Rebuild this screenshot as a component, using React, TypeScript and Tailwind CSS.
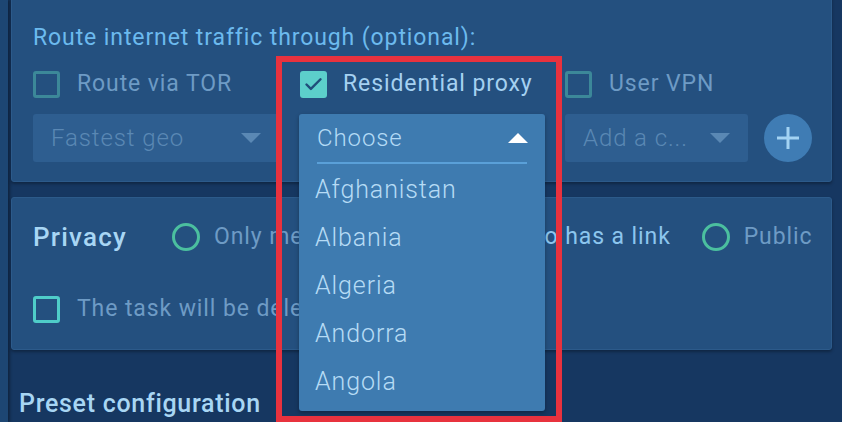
import { Check } from 'lucide-react';

const COUNTRIES = ['Afghanistan', 'Albania', 'Algeria', 'Andorra', 'Angola'];

function Box({ checked = false, dim = false }: { checked?: boolean; dim?: boolean }) {
  if (checked) {
    return (
      <span className="w-[27px] h-[27px] rounded-[3px] bg-[#5ccfcb] flex items-center justify-center shrink-0">
        <Check className="w-[21px] h-[21px] text-[#1f4d7a]" strokeWidth={2.8} />
      </span>
    );
  }
  return (
    <span
      className={`w-[27px] h-[27px] rounded-[3px] border-[3px] shrink-0 ${dim ? 'border-[#3c8899]' : 'border-[#4fcdc9]'}`}
    />
  );
}

function Radio() {
  return <span className="w-[28px] h-[28px] rounded-full border-[3px] border-[#4bbf9f] shrink-0" />;
}

function DownArrow({ color }: { color: string }) {
  return (
    <svg width="20" height="10" viewBox="0 0 20 10" className="shrink-0">
      <path d="M0 0 L20 0 L10 10 Z" fill={color} />
    </svg>
  );
}

function ClosedSelect({ label, wide = true }: { label: string; wide?: boolean }) {
  return (
    <div
      className={`h-[48px] rounded-[3px] bg-[#2e5e90] flex items-center pl-[18px] pr-[18px] gap-2 ${wide ? 'w-[246px]' : 'w-[183px]'}`}
    >
      <span className="flex-1 text-[24px] tracking-[0.9px] text-[#5a88b4] font-light truncate">{label}</span>
      <DownArrow color="#5a88b4" />
    </div>
  );
}

function OpenSelect() {
  return (
    <div className="absolute left-0 top-0 w-[246px] h-[297px] rounded-[3px] bg-[#3e7bb0] shadow-[0_2px_4px_rgba(0,0,0,0.3)] z-10">
      <div className="mx-[18px] h-[50px] border-b-2 border-[#5aa0d8] flex items-center justify-between">
        <span className="text-[24px] tracking-[0.9px] font-light text-[#b3daf5]">Choose</span>
        <svg width="20" height="10" viewBox="0 0 20 10" className="mr-[-1px]">
          <path d="M0 10 L20 10 L10 0 Z" fill="#ffffff" />
        </svg>
      </div>
      <ul className="mt-[2px]">
        {COUNTRIES.map((c) => (
          <li key={c} className="h-[48px] flex items-center pl-[16px] text-[25px] tracking-[0.9px] font-light text-[#b6dbf5]">
            {c}
          </li>
        ))}
      </ul>
    </div>
  );
}

export default function App() {
  return (
    <div
      className="w-[842px] h-[422px] overflow-hidden bg-[#163761] flex relative"
      style={{ fontFamily: 'Roboto, "Noto Sans", sans-serif' }}
    >
      <div className="w-[8px] bg-[#1d4673] shadow-[2px_0_3px_rgba(0,0,0,0.35)]" />
      <div className="ml-[3px] w-[821px] flex flex-col">
        {/* Routing panel */}
        <div className="-mt-[10px] h-[194px] bg-[#24507f] border border-[#2c5a8a] rounded-[3px] shadow-[0_2px_3px_rgba(0,0,0,0.3)] pl-[21px] pt-[33px]">
          <div className="text-[23px] tracking-[0.9px] leading-[28px] text-[#6cbaee]">Route internet traffic through (optional):</div>
          <div className="flex gap-[20px] mt-[18px]">
            <div className="w-[246px] flex flex-col gap-[16px]">
              <label className="flex items-center gap-[17px] h-[28px]">
                <Box dim />
                <span className="text-[23px] tracking-[0.9px] text-[#6e9bc5]">Route via TOR</span>
              </label>
              <ClosedSelect label="Fastest geo" />
            </div>
            <div className="w-[246px] flex flex-col gap-[16px]">
              <label className="flex items-center gap-[16px] h-[28px] pl-[1px]">
                <Box checked />
                <span className="text-[23px] tracking-[0.9px] text-[#a5d1f1]">Residential proxy</span>
              </label>
              <div className="relative h-[48px]">
                <OpenSelect />
              </div>
            </div>
            <div className="flex flex-col gap-[16px]">
              <label className="flex items-center gap-[17px] h-[28px]">
                <Box dim />
                <span className="text-[23px] tracking-[0.9px] text-[#6e9bc5]">User VPN</span>
              </label>
              <div className="flex items-center gap-[16px]">
                <ClosedSelect label="Add a c..." wide={false} />
                <button className="w-[48px] h-[48px] rounded-full bg-[#3f7cb4] flex items-center justify-center">
                  <svg width="24" height="24" viewBox="0 0 24 24">
                    <path d="M12 1 V23 M1 12 H23" stroke="#a3d3f3" strokeWidth="3" />
                  </svg>
                </button>
              </div>
            </div>
          </div>
        </div>

        {/* Privacy panel */}
        <div className="mt-[15px] h-[154px] bg-[#24507f] border border-[#2c5a8a] rounded-[3px] shadow-[0_2px_3px_rgba(0,0,0,0.3)] pl-[21px] pt-[23px]">
          <div className="flex items-center h-[32px]">
            <span className="text-[26px] font-medium tracking-[1.2px] text-[#a8d6f4] w-[139px]">Privacy</span>
            <label className="flex items-center gap-[14px]">
              <Radio />
              <span className="text-[23px] tracking-[0.9px] text-[#6e9bc5]">Only me</span>
            </label>
            <label className="flex items-center gap-[14px] ml-[79px]">
              <Radio />
              <span className="text-[23px] tracking-[0.9px] text-[#8cc6ee]">Anyone who has a link</span>
            </label>
            <label className="flex items-center gap-[14px] ml-[31px]">
              <Radio />
              <span className="text-[23px] tracking-[0.9px] text-[#6e9bc5]">Public</span>
            </label>
          </div>
          <label className="flex items-center gap-[17px] mt-[39px]">
            <Box />
            <span className="text-[23px] tracking-[0.9px] text-[#6e9bc5]">The task will be deleted after 30 days</span>
          </label>
        </div>

        <div className="pl-[8px] mt-[35px] text-[25px] font-medium tracking-[0.7px] text-[#a8d6f4]">Preset configuration</div>
      </div>

      {/* highlight frame */}
      <div className="absolute left-[276px] top-[56px] w-[286px] h-[366px] border-[6px] border-[#e8323e] z-20 pointer-events-none" />
    </div>
  );
}
